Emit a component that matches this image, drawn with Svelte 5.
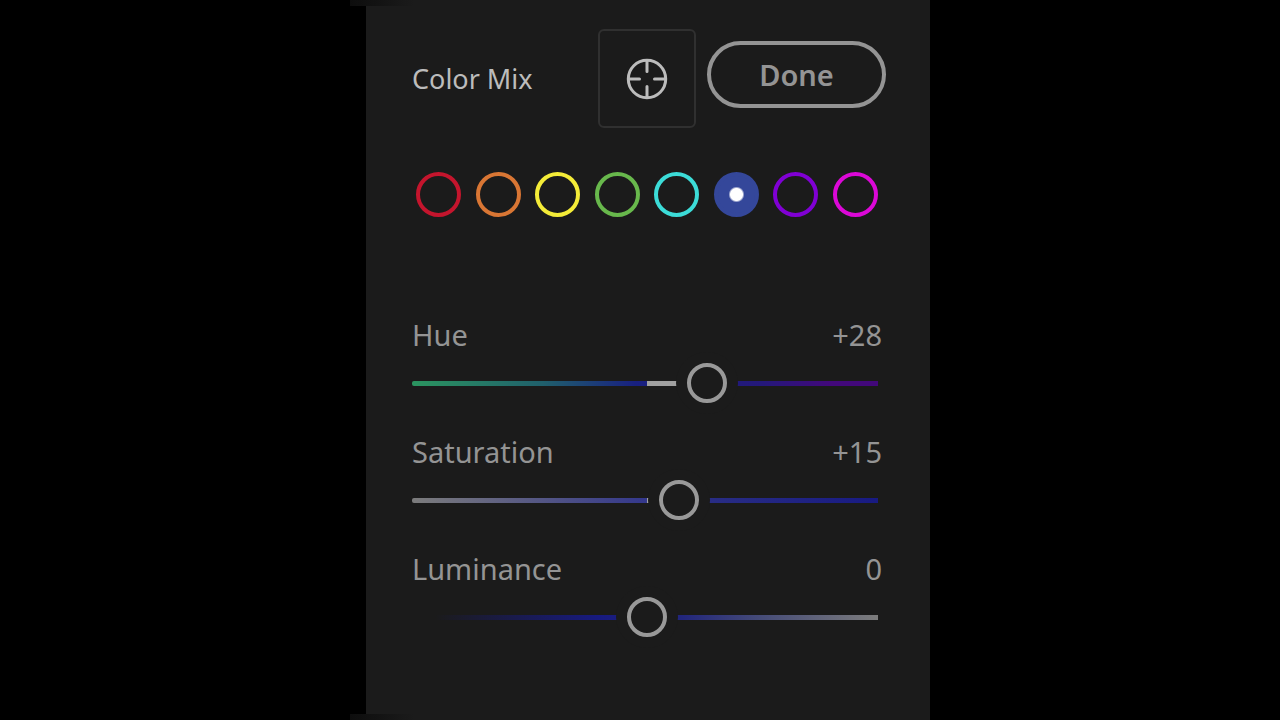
<script lang="ts">
  const colors = [
    { name: 'Red', hex: '#c4152d' },
    { name: 'Orange', hex: '#d97634' },
    { name: 'Yellow', hex: '#f4ec38' },
    { name: 'Green', hex: '#68b84c' },
    { name: 'Aqua', hex: '#3cdcd8' },
    { name: 'Blue', hex: '#34479a' },
    { name: 'Purple', hex: '#8000d4' },
    { name: 'Magenta', hex: '#dc08d8' }
  ];

  let selected = $state('Blue');
  let sliders = $state([
    { id: 'hue', label: 'Hue', value: 28 },
    { id: 'saturation', label: 'Saturation', value: 15 },
    { id: 'luminance', label: 'Luminance', value: 0 }
  ]);

  const signed = (n: number) => (n > 0 ? `+${n}` : `${n}`);
</script>

<main class="stage">
  <section class="panel">
    <header class="header">
      <h1>Color Mix</h1>
      <button class="target" type="button" aria-label="Targeted adjustment">
        <svg viewBox="0 0 42 42" width="42" height="42" fill="none" stroke="currentColor" stroke-width="3">
          <circle cx="21" cy="21" r="18.7" />
          <path d="M21 3v10.5M21 28.5v10.5M3 21h10.5M28.5 21h10.5" stroke-linecap="round" />
        </svg>
      </button>
      <button class="done" type="button">Done</button>
    </header>

    <div class="swatches" role="radiogroup" aria-label="Color">
      {#each colors as c}
        <input
          class="swatch"
          type="radio"
          name="color"
          value={c.name}
          aria-label={c.name}
          bind:group={selected}
          style="--c: {c.hex}"
        />
      {/each}
    </div>

    <div class="sliders">
      {#each sliders as s}
        <div class="slider">
          <div class="row">
            <label for={s.id}>{s.label}</label>
            <output for={s.id}>{signed(s.value)}</output>
          </div>
          <input
            id={s.id}
            class="range {s.id}"
            type="range"
            min="-100"
            max="100"
            bind:value={s.value}
            style="--fill: {Math.max(s.value, 0) / 2}%"
          />
        </div>
      {/each}
    </div>
  </section>
</main>

<style>
  :global(body) {
    background: #000;
  }
  .stage {
    box-sizing: border-box;
    width: 100%;
    max-width: 580px;
    min-height: 100vh;
    margin: 0 auto;
    padding-left: 16px;
    background:
      linear-gradient(to right, #0d0d0d, #1b1b1b) top left / 64px 6px no-repeat,
      linear-gradient(to right, #0d0d0d, #1b1b1b) bottom left / 64px 6px no-repeat,
      linear-gradient(to right, #000 16px, #1b1b1b 16px);
    font-family: 'Noto Sans', 'Open Sans', sans-serif;
    color: #949494;
  }
  .panel {
    padding: 29px 44px 64px 46px;
  }

  .header {
    display: flex;
    align-items: center;
  }
  h1 {
    flex: 1;
    margin: 0;
    font-size: 27px;
    font-weight: 400;
    line-height: 40px;
    color: #bcbcbc;
  }
  button {
    box-sizing: border-box;
    padding: 0;
    background: none;
    font-family: inherit;
    cursor: pointer;
  }
  .target {
    display: grid;
    place-items: center;
    width: 98px;
    height: 99px;
    margin-right: 11px;
    border: 2px solid #303030;
    border-radius: 6px;
    color: #bcbcbc;
  }
  .done {
    align-self: flex-start;
    width: 179px;
    height: 67px;
    margin-top: 12px;
    border: 4px solid #949494;
    border-radius: 34px;
    font-size: 29px;
    font-weight: 600;
    color: #949494;
  }

  .swatches {
    display: flex;
    justify-content: space-between;
    margin: 44px 8px 0 4px;
  }
  .swatch {
    appearance: none;
    box-sizing: border-box;
    width: 45px;
    height: 45px;
    margin: 0;
    border: 4px solid var(--c);
    border-radius: 50%;
    cursor: pointer;
  }
  .swatch:checked {
    background: radial-gradient(circle, #fff 6px, var(--c) 8px) border-box;
  }

  .sliders {
    display: grid;
    gap: 29px;
    margin: 98px 4px 0 0;
  }
  .row {
    display: flex;
    justify-content: space-between;
    margin-bottom: 8px;
    font-size: 29px;
    line-height: 40px;
  }
  .range {
    appearance: none;
    display: block;
    width: 100%;
    height: 40px;
    margin: 0;
    background: none;
    cursor: pointer;
  }
  .range::-webkit-slider-runnable-track {
    height: 5px;
    border-radius: 2px;
    /* the grey bar runs from the centre to the thumb */
    background:
      linear-gradient(to right, transparent 50%, #a0a0a0 50%, #a0a0a0 calc(50% + var(--fill)), transparent calc(50% + var(--fill))),
      var(--track) 0 0 / calc(100% - 4px) 5px no-repeat;
  }
  /* the wide ring in the panel colour leaves a gap on each side */
  .range::-webkit-slider-thumb {
    appearance: none;
    box-sizing: border-box;
    width: 40px;
    height: 40px;
    margin-top: -18px;
    border: 4px solid #999;
    border-radius: 50%;
    background: #1b1b1b;
    box-shadow: 0 0 0 11px #1b1b1b;
  }
  .hue {
    --track: linear-gradient(to right, #2b9560, #20606c 28%, #182080 48%, #24187a 75%, #42087a 90%);
  }
  .saturation {
    --track: linear-gradient(to right, #7c7c7c, #34388c 50%, #282c84 65%, #181a82);
  }
  .luminance {
    --track: linear-gradient(to right, #1b1b1b 5%, #171a80 40%, #22267c 58%, #464c78 75%, #7c7c7c);
  }
</style>
